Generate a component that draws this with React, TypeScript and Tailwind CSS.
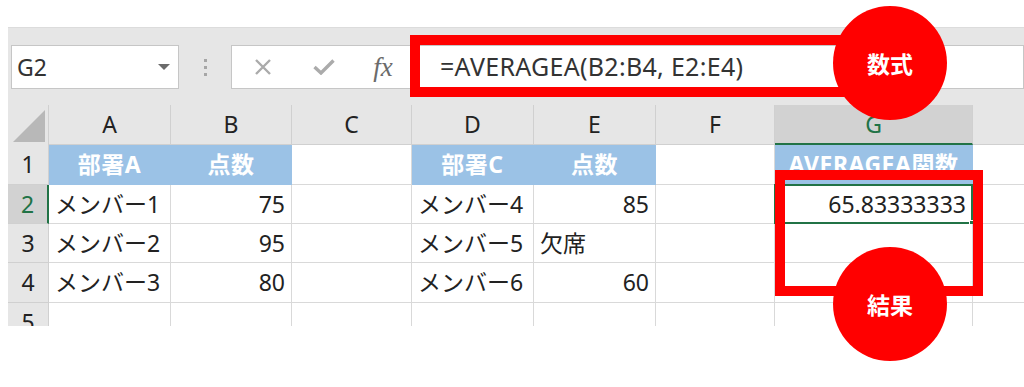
type Cell = {
  text?: string;
  kind?: "head" | "num" | "text";
  selected?: boolean;
};

// H is only a sliver at the right edge; its letter is out of view
const columns = [
  { key: "A", label: "A", width: "w-[122px]" },
  { key: "B", label: "B", width: "w-[121px]" },
  { key: "C", label: "C", width: "w-[120px]" },
  { key: "D", label: "D", width: "w-[122px]" },
  { key: "E", label: "E", width: "w-[122px]" },
  { key: "F", label: "F", width: "w-[119px]" },
  { key: "G", label: "G", width: "w-[198px]" },
  { key: "H", label: "", width: "w-[122px]" },
];

const rows: { num: number; height: string; cells: Cell[] }[] = [
  {
    num: 1,
    height: "h-[40px]",
    cells: [
      { text: "部署A", kind: "head" },
      { text: "点数", kind: "head" },
      {},
      { text: "部署C", kind: "head" },
      { text: "点数", kind: "head" },
      {},
      { text: "AVERAGEA関数", kind: "head" },
      {},
    ],
  },
  {
    num: 2,
    height: "h-[39px]",
    cells: [
      { text: "メンバー1", kind: "text" },
      { text: "75", kind: "num" },
      {},
      { text: "メンバー4", kind: "text" },
      { text: "85", kind: "num" },
      {},
      { text: "65.83333333", kind: "num", selected: true },
      {},
    ],
  },
  {
    num: 3,
    height: "h-[39px]",
    cells: [
      { text: "メンバー2", kind: "text" },
      { text: "95", kind: "num" },
      {},
      { text: "メンバー5", kind: "text" },
      { text: "欠席", kind: "text" },
      {},
      {},
      {},
    ],
  },
  {
    num: 4,
    height: "h-[40px]",
    cells: [
      { text: "メンバー3", kind: "text" },
      { text: "80", kind: "num" },
      {},
      { text: "メンバー6", kind: "text" },
      { text: "60", kind: "num" },
      {},
      {},
      {},
    ],
  },
  { num: 5, height: "h-[40px]", cells: [{}, {}, {}, {}, {}, {}, {}, {}] },
];

function GridCell({ cell, width }: { cell: Cell; width: string }) {
  if (cell.kind === "head") {
    return (
      <div
        className={`${width} flex shrink-0 items-center justify-center border-r border-b border-[#9bc2e6] bg-[#9bc2e6] text-[23px] font-bold tracking-[0.5px] text-white`}
      >
        <span className="whitespace-nowrap">{cell.text}</span>
      </div>
    );
  }
  return (
    <div
      className={`${width} relative flex shrink-0 items-center border-r border-b border-[#d9d9d9] bg-white px-[6px] text-[23px] text-[#222] ${
        cell.kind === "num" ? "justify-end" : "justify-start"
      }`}
    >
      <span className="whitespace-nowrap">{cell.text}</span>
      {cell.selected && (
        <>
          <div className="absolute -top-px -left-px h-[calc(100%+2px)] w-[calc(100%+2px)] border-2 border-[#217346]" />
          <div className="absolute -right-[4px] -bottom-[4px] h-[7px] w-[7px] border border-white bg-[#217346]" />
        </>
      )}
    </div>
  );
}

export default function App() {
  return (
    <div className="relative h-[387px] w-[1024px] overflow-hidden bg-white font-['Noto_Sans','Noto_Sans_CJK_JP',sans-serif]">
      <div className="h-[27px]" />

      <div className="ml-[8px] h-[299px] overflow-hidden bg-[#e6e6e6]">
        {/* Formula bar */}
        <div className="flex h-[78px] items-start border-t border-[#dcdcdc] pt-[17px]">
          <div className="ml-[3px] flex h-[44px] w-[168px] items-center justify-between border border-[#c6c6c6] bg-white pr-[8px] pl-[5px]">
            <span className="text-[23px] text-[#333]">G2</span>
            <svg width="12" height="6" viewBox="0 0 12 6">
              <path d="M0 0 L12 0 L6 6 Z" fill="#6b6b6b" />
            </svg>
          </div>
          <div className="flex h-[44px] w-[52px] flex-col items-center justify-center gap-[4px]">
            <div className="h-[3px] w-[3px] bg-[#a6a6a6]" />
            <div className="h-[3px] w-[3px] bg-[#a6a6a6]" />
            <div className="h-[3px] w-[3px] bg-[#a6a6a6]" />
          </div>
          <div className="flex h-[44px] flex-1 items-center border border-[#c6c6c6] bg-white">
            <div className="flex w-[62px] justify-center">
              <svg width="18" height="18" viewBox="0 0 18 18">
                <path d="M2 2 L16 16 M16 2 L2 16" stroke="#ababab" strokeWidth="2.4" fill="none" />
              </svg>
            </div>
            <div className="flex w-[60px] justify-center">
              <svg width="22" height="16" viewBox="0 0 22 16">
                <path d="M1.5 8 L8 14 L20.5 1.5" stroke="#ababab" strokeWidth="3.4" fill="none" />
              </svg>
            </div>
            <div className="flex w-[58px] justify-center">
              <span className="font-['Liberation_Serif',serif] text-[27px] leading-none text-[#6b6b6b] italic">
                fx
              </span>
            </div>
            <span className="ml-[28px] text-[25px] tracking-[0.3px] whitespace-nowrap text-[#333]">
              =AVERAGEA(B2:B4, E2:E4)
            </span>
          </div>
        </div>

        {/* Column headers */}
        <div className="flex h-[40px]">
          <div className="flex w-[41px] shrink-0 items-end justify-end border-r border-[#d0d0d0] pr-[3px] pb-[3px]">
            <svg width="32" height="32" viewBox="0 0 32 32">
              <path d="M32 0 L32 32 L0 32 Z" fill="#b8b8b8" />
            </svg>
          </div>
          {columns.map((col) =>
            col.key === "G" ? (
              <div
                key={col.key}
                className={`${col.width} flex shrink-0 items-center justify-center border-r border-b-2 border-r-[#d0d0d0] border-b-[#217346] bg-[#d2d2d2] text-[23px] text-[#217346]`}
              >
                {col.label}
              </div>
            ) : (
              <div
                key={col.key}
                className={`${col.width} flex shrink-0 items-center justify-center border-r border-b border-[#d0d0d0] text-[23px] text-[#222]`}
              >
                {col.label}
              </div>
            ),
          )}
        </div>

        {/* Rows */}
        {rows.map((row) => (
          <div key={row.num} className={`flex ${row.height}`}>
            <div
              className={`flex w-[41px] shrink-0 items-center justify-center border-b border-[#d0d0d0] text-[23px] ${
                row.num === 2
                  ? "border-r-2 border-r-[#217346] bg-[#d2d2d2] text-[#217346]"
                  : "border-r border-r-[#d0d0d0] text-[#222]"
              }`}
            >
              {row.num}
            </div>
            {row.cells.map((cell, i) => (
              <GridCell key={i} cell={cell} width={columns[i].width} />
            ))}
          </div>
        ))}
      </div>

      {/* Callouts */}
      <div className="absolute top-[35px] left-[410px] h-[62px] w-[470px] border-[10px] border-[#ff0000]" />
      <div className="absolute top-[170px] left-[775px] h-[126px] w-[208px] border-[10px] border-[#ff0000]" />
      <div className="absolute top-[6px] left-[833px] flex h-[114px] w-[114px] items-center justify-center rounded-full bg-[#ff0000] font-['Noto_Sans_CJK_JP',sans-serif] text-[23px] font-bold text-white">
        数式
      </div>
      <div className="absolute top-[247px] left-[833px] flex h-[114px] w-[114px] items-center justify-center rounded-full bg-[#ff0000] font-['Noto_Sans_CJK_JP',sans-serif] text-[23px] font-bold text-white">
        結果
      </div>
    </div>
  );
}
